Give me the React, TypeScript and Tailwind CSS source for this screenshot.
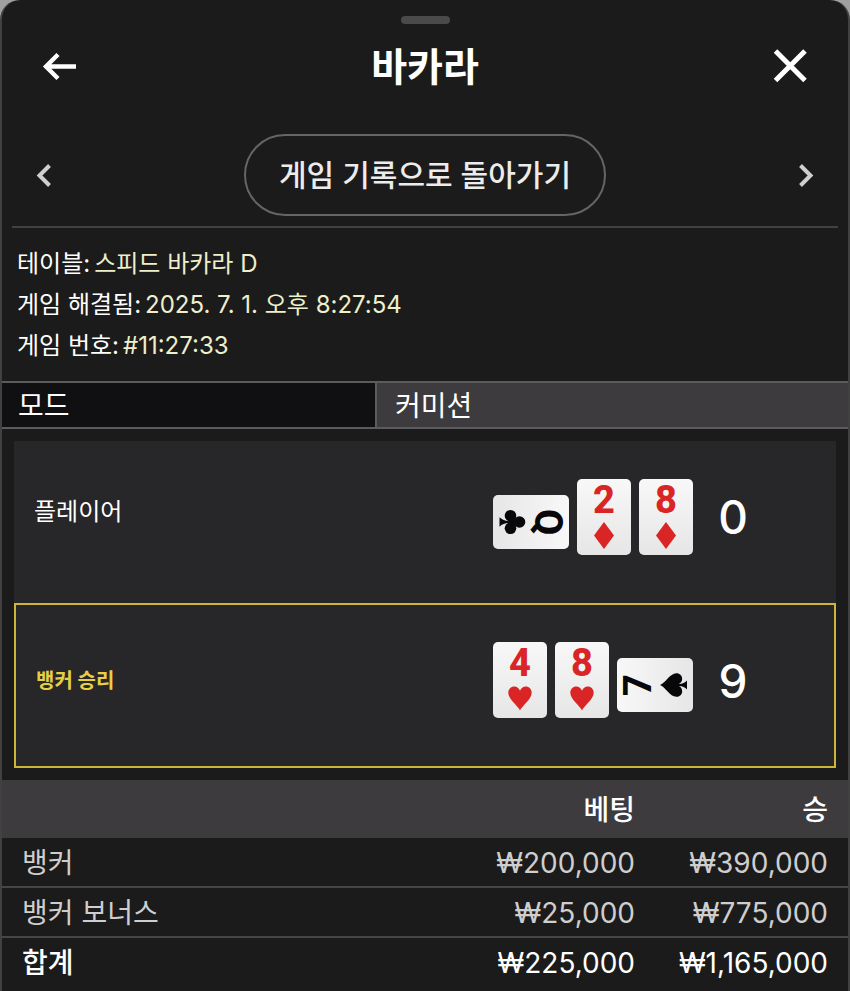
type Suit = 'club' | 'diamond' | 'heart' | 'spade'
type Turn = 'none' | 'right' | 'left'

interface CardData {
  rank: string
  suit: Suit
  turn?: Turn
}

interface HandData {
  label: string
  cards: CardData[]
  score: number
  winner?: boolean
}

const details = [
  { label: '테이블:', value: '스피드 바카라 D' },
  { label: '게임 해결됨:', value: '2025. 7. 1. 오후 8:27:54' },
  { label: '게임 번호:', value: '#11:27:33' },
]

const hands: HandData[] = [
  {
    label: '플레이어',
    score: 0,
    cards: [{ rank: 'Q', suit: 'club', turn: 'right' }, { rank: '2', suit: 'diamond' }, { rank: '8', suit: 'diamond' }],
  },
  {
    label: '뱅커 승리',
    score: 9,
    winner: true,
    cards: [{ rank: '4', suit: 'heart' }, { rank: '8', suit: 'heart' }, { rank: '7', suit: 'spade', turn: 'left' }],
  },
]

const bets = [
  { name: '뱅커', bet: '₩200,000', win: '₩390,000' },
  { name: '뱅커 보너스', bet: '₩25,000', win: '₩775,000' },
]

function SuitIcon({ suit }: { suit: Suit }) {
  return <svg aria-hidden="true" viewBox="0 0 28 28" className="h-7 w-7 fill-current">
    {suit === 'diamond' && <path d="M14 0 24 13.500 14 27 4 13.500Z" />}
    {suit === 'heart' && <path d="M14 25.500C12.500 21.500 2.300 14.500 2.300 7.800C2.300 4 5 1.500 8.200 1.500C11 1.500 13 3.300 14 5.800C15 3.300 17 1.500 19.800 1.500C23 1.500 25.700 4 25.700 7.800C25.700 14.500 15.500 21.500 14 25.500Z" />}
    {suit === 'club' && <>
      <circle cx="14" cy="6.500" r="5.800" />
      <circle cx="7.700" cy="15.500" r="5.800" />
      <circle cx="20.300" cy="15.500" r="5.800" />
      <path d="M11 10h6l1.500 7h-3.500c0 4 1.300 7 3.700 9.500H9.300C11.700 24 13 21 13 17H9.500Z" />
    </>}
    {suit === 'spade' && <path d="M14 0C15.500 5 25.800 10 25.800 16.300C25.800 20 23.200 22.200 20.200 22.200C17.700 22.200 15.900 20.800 15 18.800C15.200 22.500 16 25 18.500 27H9.500C12 25 12.800 22.500 13 18.800C12.100 20.800 10.300 22.200 7.800 22.200C4.800 22.200 2.200 20 2.200 16.300C2.200 10 12.500 5 14 0Z" />}
  </svg>
}

function PlayingCard({ rank, suit, turn = 'none' }: CardData) {
  const red = suit === 'diamond' || suit === 'heart'
  const face = <div
    className={`flex h-19 w-[54px] shrink-0 flex-col items-center gap-1 rounded-[5px] bg-linear-to-b from-[#f8f8f8] to-[#e6e6e6] pt-[3px] font-['Roboto',sans-serif] text-[38px] leading-9 font-extrabold ${red ? 'text-[#d92525]' : 'text-[#08080a]'} ${turn === 'right' ? 'rotate-90' : ''} ${turn === 'left' ? '-rotate-90' : ''}`}
  >
    <span>{rank}</span>
    <SuitIcon suit={suit} />
  </div>
  if (turn === 'none') return face
  return <div className="mb-1.5 flex h-[54px] w-19 items-center justify-center">{face}</div>
}

function Hand({ label, cards, score, winner = false }: HandData) {
  return <section
    className={`flex items-center border-2 bg-[#272628] pr-[61px] ${winner ? 'h-[165px] border-[#cdb637] pl-5' : 'h-[162px] border-transparent pl-[18px]'}`}
  >
    <h2 className={`flex-1 ${winner ? 'pb-2.5 text-xl font-bold text-[#e6cf45]' : 'pb-5 text-2xl text-white'}`}>{label}</h2>
    <div className={`flex items-end gap-2 ${winner ? 'pb-3' : 'pb-2.5'}`}>
      {cards.map((card, index) => <PlayingCard key={index} {...card} />)}
    </div>
    <strong className="w-20 pb-2.5 text-center text-[46px] leading-none font-medium text-white">{score}</strong>
  </section>
}

export default function App() {
  return <div className="min-h-screen bg-[#a0a0a0] font-['Inter','Noto_Sans_CJK_KR',sans-serif] text-white">
    <main className="min-h-screen overflow-hidden rounded-t-[20px] border-x-2 border-[#414142] bg-[#1b1b1b]">
      <header className="px-2.5">
        <div className="mx-auto h-6 w-[49px] pt-4"><div className="h-2 rounded-full bg-[#4a4a4b]" /></div>
        <div className="flex h-[84px] items-center justify-between px-[26px]">
          <button type="button" aria-label="뒤로">
            <svg viewBox="0 0 40 40" className="h-10 w-10 fill-none stroke-white" strokeWidth="4.400"><path d="M38 20.500H7M20 8.500 8 20.500l12 12" /></svg>
          </button>
          <h1 className="text-[39px] leading-none font-bold">바카라</h1>
          <button type="button" aria-label="닫기">
            <svg viewBox="0 0 40 40" className="h-10 w-10 fill-none stroke-white" strokeWidth="5"><path d="m3.500 5 29.500 29.500M33 5 3.500 34.500" /></svg>
          </button>
        </div>
        <nav className="flex h-[120px] items-center justify-between border-b-2 border-[#414142] px-5 pt-4">
          <button type="button" aria-label="이전 게임">
            <svg viewBox="0 0 24 28" className="h-7 w-6 fill-none stroke-[#cfcfcf]" strokeWidth="4"><path d="M17.500 4.500 7.500 14.500l10 10" /></svg>
          </button>
          <button type="button" className="h-[82px] rounded-full border-2 border-[#656565] px-[33px] text-[30px] font-medium text-[#ececec]">게임 기록으로 돌아가기</button>
          <button type="button" aria-label="다음 게임">
            <svg viewBox="0 0 24 28" className="h-7 w-6 fill-none stroke-[#cfcfcf]" strokeWidth="4"><path d="m6.500 4.500 10 10-10 10" /></svg>
          </button>
        </nav>
      </header>

      <dl className="px-[15px] py-[15px] text-2xl">
        {details.map((item) => <div key={item.label} className="flex h-[41px] items-center gap-1">
          <dt>{item.label}</dt>
          <dd className="text-[#eeefcb]">{item.value}</dd>
        </div>)}
      </dl>

      <div className="flex h-12 border-y-2 border-[#5b5a5d] text-[28px] leading-[46px]">
        <div className="w-[375px] border-r-2 border-[#5b5a5d] bg-[#100f11] pl-4">모드</div>
        <div className="flex-1 bg-[#3d3b3e] pl-[18px]">커미션</div>
      </div>

      <div className="p-3">
        {hands.map((hand) => <Hand key={hand.label} {...hand} />)}
      </div>

      <table className="w-full text-right text-[28px] leading-[46px] text-[#cfcecf]">
        <thead className="bg-[#3d3b3e] text-white">
          <tr className="h-[58px]">
            <td />
            <th scope="col" className="pt-0.5 font-medium">베팅</th>
            <th scope="col" className="w-[213px] pt-0.5 pr-5 font-medium">승</th>
          </tr>
        </thead>
        <tbody>
          {bets.map((row) => <tr key={row.name} className="border-b-2 border-[#464548]">
            <th scope="row" className="pt-0.5 pl-5 text-left font-normal">{row.name}</th>
            <td className="pt-0.5">{row.bet}</td>
            <td className="pt-0.5 pr-5">{row.win}</td>
          </tr>)}
        </tbody>
        <tfoot className="text-white">
          <tr>
            <th scope="row" className="pt-0.5 pl-5 text-left font-medium">합계</th>
            <td className="pt-0.5">₩225,000</td>
            <td className="pt-0.5 pr-5">₩1,165,000</td>
          </tr>
        </tfoot>
      </table>
    </main>
  </div>
}
